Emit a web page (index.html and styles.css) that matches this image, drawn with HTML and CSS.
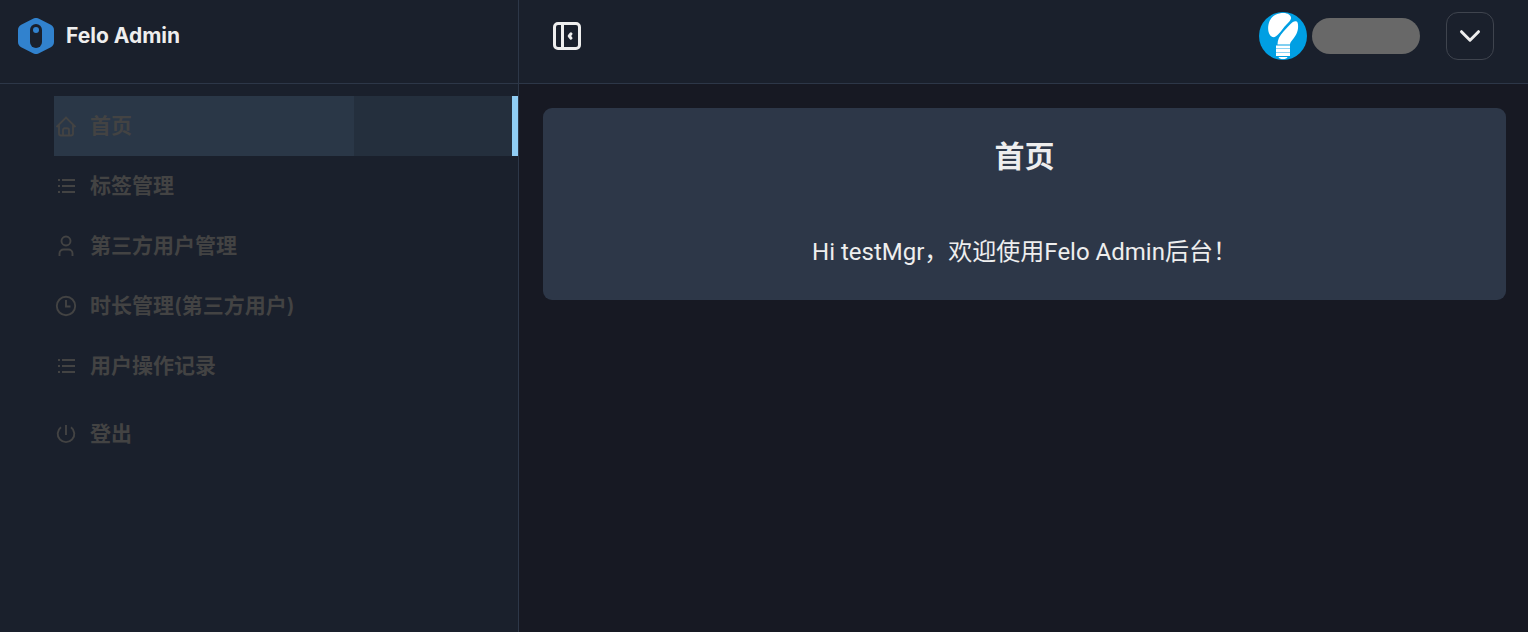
FILE: index.html
```html
<!DOCTYPE html>
<html lang="zh-CN">
<head>
<meta charset="utf-8">
<title>Felo Admin</title>
<link rel="stylesheet" href="styles.css">
</head>
<body>
<div class="app">
  <aside class="sidebar">
    <div class="brand">
      <svg class="brand-logo" viewBox="0 0 36 36" aria-hidden="true">
        <path d="M15 .8a6 6 0 0 1 6 0L32.800 6.800A6 6 0 0 1 36 12v12a6 6 0 0 1-3.200 5.200L21 35.200a6 6 0 0 1-6 0L3.200 29.200A6 6 0 0 1 0 24V12a6 6 0 0 1 3.200-5.200z" fill="#3182ce"/>
        <rect x="12" y="6" width="12" height="24" rx="6" fill="#1a202c"/>
        <circle cx="18" cy="12" r="3" fill="#3182ce"/>
      </svg>
      <span class="brand-name">Felo Admin</span>
    </div>
    <nav class="menu">
      <div class="menu-item active">
        <a class="menu-link" href="#home">
          <svg class="icon" viewBox="0 0 24 24"><path d="M2.500 13 12 3.500 21.500 13M5 11v8.500a2 2 0 0 0 2 2h10a2 2 0 0 0 2-2V11M9 21.500V16a1.800 1.800 0 0 1 1.800-1.800h2.400A1.800 1.800 0 0 1 15 16v5.500"/></svg>
          <span>首页</span>
        </a>
      </div>
      <div class="menu-item">
        <a class="menu-link" href="#tags">
          <svg class="icon" viewBox="0 0 24 24"><path d="M8 6h13M8 12h13M8 18h13M4 6h2M4 12h2M4 18h2"/></svg>
          <span>标签管理</span>
        </a>
      </div>
      <div class="menu-item">
        <a class="menu-link" href="#users">
          <svg class="icon" viewBox="0 0 24 24"><circle cx="12" cy="7" r="4.500"/><path d="M5.500 22v-2.500a4 4 0 0 1 4-4h5a4 4 0 0 1 4 4V22"/></svg>
          <span>第三方用户管理</span>
        </a>
      </div>
      <div class="menu-item">
        <a class="menu-link" href="#duration">
          <svg class="icon" viewBox="0 0 24 24"><circle cx="12" cy="12" r="9.200"/><path d="M12 6v6.500h4.500"/></svg>
          <span>时长管理(第三方用户)</span>
        </a>
      </div>
      <div class="menu-item">
        <a class="menu-link" href="#records">
          <svg class="icon" viewBox="0 0 24 24"><path d="M8 6h13M8 12h13M8 18h13M4 6h2M4 12h2M4 18h2"/></svg>
          <span>用户操作记录</span>
        </a>
      </div>
      <div class="menu-item logout">
        <a class="menu-link" href="#logout">
          <svg class="icon" viewBox="0 0 24 24"><path d="M12 3v10M7 5.200a8.300 8.300 0 1 0 10 0"/></svg>
          <span>登出</span>
        </a>
      </div>
    </nav>
  </aside>
  <div class="page">
    <header class="topbar">
      <button class="collapse" type="button" aria-label="收起菜单">
        <svg viewBox="0 0 28 28" width="28" height="28"><rect x="1.500" y="1.500" width="25" height="25" rx="3.500"/><path d="M9.500 2v24M18 11.800 16.200 14l1.800 2.200"/></svg>
      </button>
      <div class="account">
        <svg class="avatar" viewBox="0 0 48 48" aria-hidden="true">
          <circle cx="24" cy="24" r="24" fill="#009fe3"/>
          <g fill="#fff">
            <path d="M13.500 25C10 24 8.300 18 9.500 12.500 11 5 17 1 24.500 1c4.500 0 8 2.500 7.500 5.500-.3 2-2.500 4-4.500 6-3 3-5 6.500-8 9.500-2 2.500-4 3.500-6 3z"/>
            <path d="M36.500 9.200c1.500-.2 2.300 1 2.500 3.300.6 6-1.500 10-4.500 14-2 2.600-3.500 4-3.500 6H18.500c0-5 2-8.500 6-13 3.500-4 6.500-7 9-9.300 1-.8 2-1 3-1z"/>
            <rect x="17" y="33.500" width="14" height="2.500"/>
            <rect x="17" y="37" width="14" height="3"/>
            <rect x="17" y="41" width="14" height="3"/>
            <path d="M19.500 45h9c-.5 1.500-2 2-4.500 2s-4-.5-4.500-2z"/>
          </g>
          <path d="M17 36.500h14M17 40.500h14" stroke="#8ed3f3"/>
        </svg>
        <span class="account-name"></span>
        <button class="account-toggle" type="button" aria-label="账户菜单">
          <svg viewBox="0 0 24 24" width="24" height="24"><path d="m3.500 7.700 8.500 8.500 8.500-8.500"/></svg>
        </button>
      </div>
    </header>
    <main class="content">
      <section class="card">
        <h1>首页</h1>
        <p>Hi testMgr，欢迎使用Felo Admin后台！</p>
      </section>
    </main>
  </div>
</div>
</body>
</html>
```
FILE: styles.css
```css
* {
  box-sizing: border-box;
}

body {
  margin: 0;
  background: #171923;
  color: #eeeeee;
  font-family: Inter, "Noto Sans CJK SC", sans-serif;
}

.app {
  display: flex;
  min-height: 100vh;
}

.sidebar {
  flex: 0 0 519px;
  background: #1a202c;
  border-right: 1px solid #2d3748;
}

.brand {
  display: flex;
  align-items: center;
  gap: 12px;
  height: 84px;
  padding: 0 18px 12px;
  border-bottom: 1px solid #2d3748;
}

.brand-logo {
  width: 36px;
  height: 36px;
}

.brand-name {
  font-size: 21px;
  font-weight: 700;
}

.menu {
  padding: 12px 0 12px 54px;
}

.menu-item.active {
  background: #242f3d;
  border-right: 6px solid #90cdf4;
}

.menu-item.active .menu-link {
  background: #2a3747;
}

.menu-item.logout {
  margin-top: 8px;
}

.menu-link {
  display: flex;
  align-items: center;
  gap: 12px;
  width: 300px;
  height: 60px;
  color: #434343;
  font-size: 21px;
  font-weight: 600;
  text-decoration: none;
}

.menu-link span {
  padding-bottom: 4px;
}

.icon {
  width: 24px;
  height: 24px;
  fill: none;
  stroke: currentColor;
  stroke-width: 1.900;
}

.page {
  flex: 1;
  min-width: 0;
}

.topbar {
  display: flex;
  align-items: center;
  justify-content: space-between;
  height: 84px;
  padding: 0 34px 12px;
  background: #1a202c;
  border-bottom: 1px solid #2d3748;
}

button {
  display: flex;
  align-items: center;
  justify-content: center;
  padding: 0;
  background: none;
  border: 0;
  color: inherit;
  cursor: pointer;
}

button svg {
  fill: none;
  stroke: currentColor;
  stroke-width: 3;
  stroke-linecap: round;
  stroke-linejoin: round;
}

.account {
  display: flex;
  align-items: center;
}

.avatar {
  width: 48px;
  height: 48px;
}

.account-name {
  width: 108px;
  height: 36px;
  margin: 0 26px 0 5px;
  border-radius: 18px;
  background: #686868;
}

.account-toggle {
  width: 48px;
  height: 48px;
  border: 1px solid #3f444e;
  border-radius: 12px;
}

.content {
  padding: 24px 22px 24px 24px;
}

.card {
  padding: 30px 24px;
  border-radius: 9px;
  background: #2d3748;
  text-align: center;
}

.card h1 {
  margin: 0 0 60px;
  font-size: 30px;
  font-weight: 600;
  line-height: 36px;
}

.card p {
  margin: 0;
  font-family: Roboto, "Noto Sans CJK SC", sans-serif;
  font-size: 24px;
  line-height: 36px;
}
```
